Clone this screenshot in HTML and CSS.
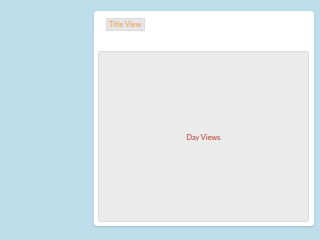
FILE: index.html
```html
<!DOCTYPE html>
<html lang="en">
<head>
  <meta charset="UTF-8">
  <meta name="viewport" content="width=device-width, initial-scale=1.0">
  <title>Day Views</title>
  <link rel="stylesheet" href="styles.css">
</head>
<body>
  <div class="card">
    <div class="header">
      <span class="title-view">Title View</span>
    </div>
    <div class="day-views">
      <p>Day Views</p>
    </div>
  </div>
</body>
</html>
```

FILE: styles.css
```css
/* Page */
body {
  margin: 0;
  background-color: #bcdde9;
  font-family: Lato, sans-serif;
  width: 320px;
  height: 240px;
}

/* Card */
.card {
  margin: 11px 0 0 94px;
  width: 220px;
  height: 215px;
  background-color: white;
  border-radius: 3px;
  box-shadow: 0 1px 2px rgba(0, 0, 0, 0.15);
  padding: 0 5px 4px 4px;
  box-sizing: border-box;
  display: flex;
  flex-direction: column;
}
.header {
  height: 40px;
  padding: 7px 0 0 8px;
  box-sizing: border-box;
  display: flex;
  align-items: flex-start;
}
.title-view {
  background-color: #e6e6e6;
  border: 1px solid #dcdcdc;
  color: #f0a04b;
  font-size: 7.4px;
  line-height: 11px;
  padding: 0 2px;
}
.day-views {
  flex: 1;
  background-color: #ebebeb;
  border: 1px solid #dadada;
  border-radius: 3px;
  display: flex;
  align-items: center;
  justify-content: center;
}
.day-views p {
  margin: 0 0 -2px;
  color: #c0392b;
  font-size: 7.4px;
}
```
